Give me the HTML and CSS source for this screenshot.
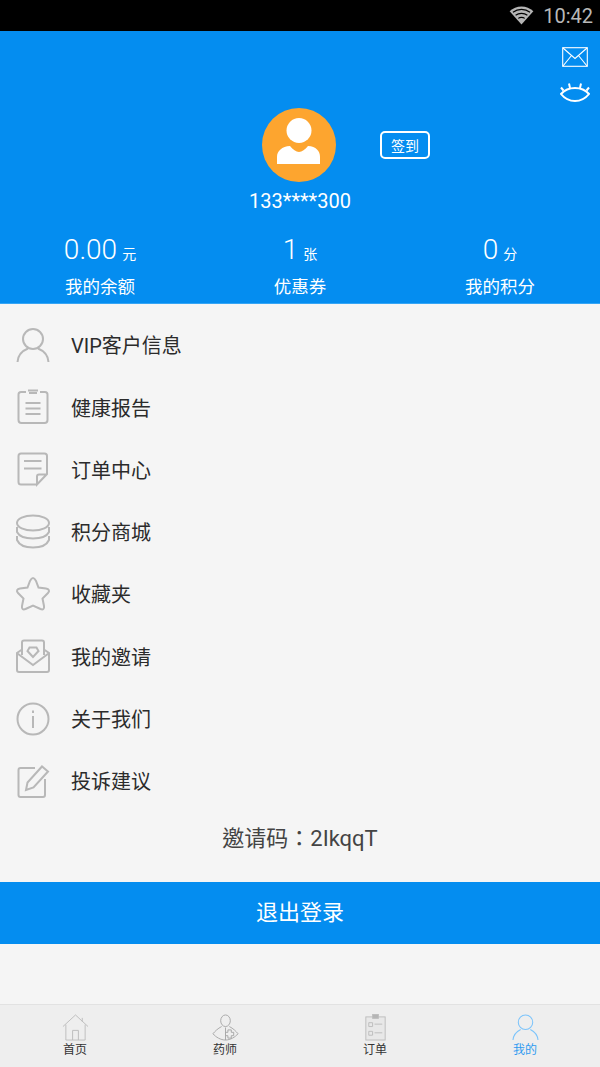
FILE: index.html

```html
<!DOCTYPE html>
<html lang="zh-CN">
<head>
  <meta charset="UTF-8">
  <meta name="viewport" content="width=device-width, initial-scale=1.0">
  <title>我的</title>
  <link rel="stylesheet" href="styles.css">
</head>
<body>
  <div class="status-bar">
    <svg class="wifi" viewBox="0 0 26 20"><path d="M13 19.5 0.5 5.5C4 2.3 8.300 0.500 13 0.500S22 2.300 25.500 5.500Z" fill="#b5b5b5"/><path d="M4 6.500C6.500 4.600 9.600 3.500 13 3.500S19.500 4.600 22 6.500M6.800 9.800C8.500 8.500 10.600 7.800 13 7.800S17.500 8.500 19.200 9.800M9.600 13C10.600 12.300 11.700 12 13 12S15.400 12.300 16.400 13" fill="none" stroke="#000" stroke-width="1.200"/></svg>
    <span class="clock">10:42</span>
  </div>

  <header class="profile">
    <div class="top-icons">
      <svg class="mail-icon" viewBox="0 0 26 20" fill="none" stroke="#fff" stroke-width="1.100"><rect x="0.700" y="0.700" width="24.600" height="18.600"/><path d="M1 1 13 11.500 25 1M1 19 9.500 8.500M25 19 16.500 8.500"/></svg>
      <svg class="eye-icon" viewBox="0 0 30 20" fill="none" stroke="#fff" stroke-width="2"><path d="M1 12C5 7.500 10 6 15 6S25 7.500 29 12C25 17 20 19 15 19S5 17 1 12Z"/><path d="M3.500 8.500 1 5.500M10 6 9 1.500M20 6 21 1.500M26.500 8.500 29 5.500"/></svg>
    </div>
    <div class="avatar-row">
      <div class="avatar">
        <svg viewBox="0 0 74 74"><circle cx="37" cy="22.500" r="12.500" fill="#fff"/><path d="M15 56V49C15 43 20 38.500 28 38C31 41.500 34 44 37 44S43 41.500 46 38C54 38.500 58 43 58 49V56Z" fill="#fff"/></svg>
      </div>
      <span class="sign-btn">签到</span>
    </div>
    <div class="phone">133****300</div>
    <div class="stats">
      <div class="stat">
        <div class="stat-value"><span class="num">0.00</span><span class="unit">元</span></div>
        <div class="stat-label">我的余额</div>
      </div>
      <div class="stat">
        <div class="stat-value"><span class="num">1</span><span class="unit">张</span></div>
        <div class="stat-label">优惠券</div>
      </div>
      <div class="stat">
        <div class="stat-value"><span class="num">0</span><span class="unit">分</span></div>
        <div class="stat-label">我的积分</div>
      </div>
    </div>
  </header>

  <ul class="menu">
    <li class="menu-item">
      <svg class="menu-icon" viewBox="0 0 36 36"><circle cx="18" cy="12" r="10"/><path d="M2.500 35C3 27 8 23.500 13 21.500M33.500 35C33 27 28 23.500 23 21.500"/></svg>
      VIP客户信息
    </li>
    <li class="menu-item">
      <svg class="menu-icon" viewBox="0 0 36 36"><path d="M11 3H6Q3.500 3 3.500 5.500V31Q3.500 34 6.500 34H29.500Q32.500 34 32.500 31V5.500Q32.500 3 30 3H25"/><path d="M13 1.500H23M14 4H22M10.500 14H25.500M10.500 19.500H25.500M10.500 25H25.500"/></svg>
      健康报告
    </li>
    <li class="menu-item">
      <svg class="menu-icon" viewBox="0 0 36 36"><path d="M22 33.500H6Q3.500 33.500 3.500 31V5Q3.500 2.500 6 2.500H29.500Q32 2.500 32 5V23L22 33.500V25.500Q22 23.500 24 23.500H32"/><path d="M9 10H26.500M9 17.500H26.500"/></svg>
      订单中心
    </li>
    <li class="menu-item">
      <svg class="menu-icon" viewBox="0 0 36 36"><ellipse cx="18" cy="9" rx="16" ry="7.500"/><path d="M2 13V18C4 22 10 24.500 18 24.500S32 22 34 18V13M2 22V26C4 30.500 10 33.500 18 33.500S32 30.500 34 26V22"/></svg>
      积分商城
    </li>
    <li class="menu-item">
      <svg class="menu-icon" viewBox="0 0 36 36"><path d="M18 2C19 2 20 3 21 5L23.500 11.500 31 12.500C34 13 35 15 33 17L27.500 22.500 29 30C29.500 33 28 34 25.500 33L18 29.500 10.500 33C8 34 6.500 33 7 30L8.500 22.500 3 17C1 15 2 13 5 12.500L12.500 11.500 15 5C16 3 17 2 18 2Z"/></svg>
      收藏夹
    </li>
    <li class="menu-item">
      <svg class="menu-icon" viewBox="0 0 36 36"><path d="M7 17V4.500Q7 2.500 9 2.500H27Q29 2.500 29 4.500V17M7 11.500 2 15V32Q2 34 4 34H32Q34 34 34 32V15L29 11.500M2.500 15.500 18 27 33.500 15.500"/><path d="M18 19 12.500 13 14.500 9.500H21.500L23.500 13Z"/></svg>
      我的邀请
    </li>
    <li class="menu-item">
      <svg class="menu-icon" viewBox="0 0 36 36"><circle cx="18" cy="18" r="15.500"/><path d="M18 15V27M18 9.500V12"/></svg>
      关于我们
    </li>
    <li class="menu-item">
      <svg class="menu-icon" viewBox="0 0 36 36"><path d="M20 5H5.500Q3.500 5 3.500 7V32Q3.500 34 5.500 34H28Q30 34 30 32V16"/><path d="M11 27 12.500 19.500 27 3.500 33 8.500 18.500 24.500Z"/></svg>
      投诉建议
    </li>
  </ul>

  <div class="invite-code" lang="zh-TW">邀请码：2IkqqT</div>
  <div class="logout">退出登录</div>
  <div class="spacer"></div>

  <nav class="tabbar">
    <div class="tab">
      <svg class="tab-icon" viewBox="0 0 28 28" fill="none" stroke="#bdbdbd" stroke-width="1"><path d="M1 13 14 1 27 13M4 11V27H24V11M21 4V8M11 27V17H17V27"/></svg>
      <span>首页</span>
    </div>
    <div class="tab">
      <svg class="tab-icon" viewBox="0 0 28 28" fill="none" stroke="#a8a8a8" stroke-width="1"><ellipse cx="14" cy="7" rx="5" ry="6"/><path d="M10 13C6 15 3 18 1 20.500C4 24 9 27 14 27S24 24 27 20.500C25 18 22 15 18 13M14 14V27"/><path d="M16.500 19V16.500H20V19H22.500V22.500H20V25H16.500V22.500H14V19Z"/></svg>
      <span>药师</span>
    </div>
    <div class="tab">
      <svg class="tab-icon" viewBox="0 0 28 28" fill="none" stroke="#bdbdbd" stroke-width="1"><rect x="4" y="3" width="20" height="24" fill="#e8e8e8"/><rect x="11" y="0.500" width="6" height="4" fill="#b5b5b5"/><path d="M7 9H11V13H7ZM7 18H11V22H7ZM13 10.500H21M13 19.500H21"/></svg>
      <span>订单</span>
    </div>
    <div class="tab tab-active">
      <svg class="tab-icon" viewBox="0 0 28 28" fill="none" stroke="#7cc4fb" stroke-width="1.100"><circle cx="14" cy="8.500" r="7.500"/><path d="M1 27C1.500 21 5 18 9 16M27 27C26.500 21 23 18 19 16"/></svg>
      <span>我的</span>
    </div>
  </nav>
</body>
</html>
```

FILE: styles.css

```css
* {box-sizing: border-box;}
html, body {margin: 0; padding: 0;}
body {width: 600px; height: 1067px; display: flex; flex-direction: column; overflow: hidden; background-color: #f5f5f5; font-family: "Roboto", "Noto Sans CJK SC", sans-serif; color: #333;}

.status-bar {height: 31px; background-color: #000; display: flex; align-items: center; justify-content: flex-end; gap: 9px; padding-right: 7px; flex-shrink: 0;}
.wifi {width: 25px; height: 19px;}
.clock {font-size: 20px; color: #b8b8b8;}

.profile {height: 273px; background-color: #048df0; border-bottom: 1px solid #35a5f5; color: #fff; display: flex; flex-direction: column; position: relative; flex-shrink: 0;}
.top-icons {position: absolute; top: 16px; right: 10px; display: flex; flex-direction: column; align-items: center; gap: 15px;}
.mail-icon {width: 26px; height: 20px; display: block;}
.eye-icon {width: 30px; height: 20px; display: block;}

.avatar-row {margin-top: 77px; display: flex; justify-content: center; position: relative; left: -1px;}
.avatar {width: 74px; height: 74px; border-radius: 50%; background-color: #fda52f;}
.avatar svg {display: block; width: 74px; height: 74px;}
.sign-btn {position: absolute; left: 381px; top: 23px; width: 50px; height: 28px; border: 2px solid #fff; border-radius: 5px; font-size: 14px; display: flex; align-items: center; justify-content: center;}
.phone {margin-top: 5px; text-align: center; font-size: 20px; line-height: 28px;}

.stats {margin-top: 16px; display: flex;}
.stat {width: 200px; text-align: center;}
.stat-value {height: 38px; display: flex; align-items: baseline; justify-content: center; gap: 5px;}
.num {font-size: 28px; line-height: 38px; font-weight: 300;}
.unit {font-size: 14px;}
.stat-label {font-size: 17.500px; line-height: 24px; margin-top: 6px;}

.menu {list-style: none; margin: 0; padding: 9.600px 0 0; flex-shrink: 0;}
.menu-item {height: 62.300px; display: flex; align-items: center; padding-left: 15px; font-size: 20px; color: #2b2b2b;}
.menu-icon {width: 36px; height: 36px; margin-right: 20px; fill: none; stroke: #b8b8b8; stroke-width: 2; flex-shrink: 0;}

.invite-code {height: 50px; text-align: center; font-size: 22px; line-height: 50px; color: #444; margin-top: 2.400px; flex-shrink: 0; font-family: "Roboto", "Noto Sans CJK TC", sans-serif;}
.logout {margin-top: 18px; height: 62px; line-height: 62px; background-color: #048df0; color: #fff; text-align: center; font-size: 22px; flex-shrink: 0;}
.spacer {flex: 1;}

.tabbar {height: 63px; background-color: #eeeeee; border-top: 1px solid #e2e2e2; display: flex; flex-shrink: 0;}
.tab {width: 150px; display: flex; flex-direction: column; align-items: center; padding-top: 9px; font-size: 12px; line-height: 18px; color: #333;}
.tab-icon {width: 27px; height: 27px; display: block;}
.tab-active {color: #2f9bf0;}
```
